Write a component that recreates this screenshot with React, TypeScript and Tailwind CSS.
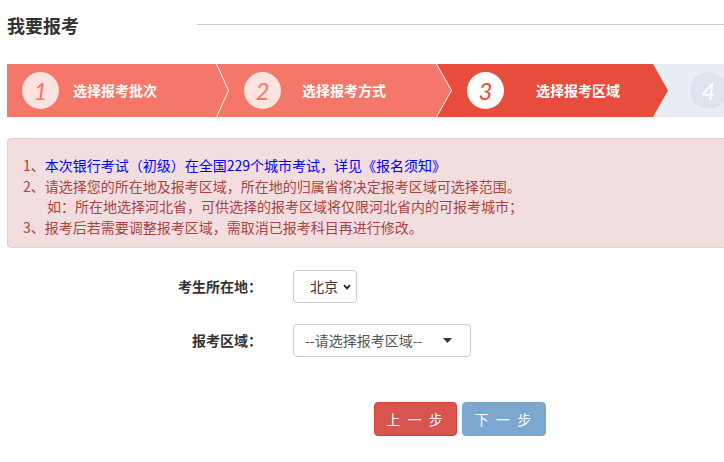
const cjk = "font-['Noto_Sans_CJK_SC','Noto_Sans',sans-serif]";

const steps = [
  {
    n: "1",
    label: "选择报考批次",
    wrap: "w-[221px] bg-[#f57769] [clip-path:polygon(0_0,calc(100%_-_12px)_0,100%_50%,calc(100%_-_12px)_100%,0_100%)] pl-[15px]",
    circle: "bg-[#fde3df] text-[#f2776b]",
    text: "ml-[14px]",
  },
  {
    n: "2",
    label: "选择报考方式",
    wrap: "w-[234px] -ml-[11px] bg-[#f57769] [clip-path:polygon(0_0,calc(100%_-_15px)_0,100%_50%,calc(100%_-_15px)_100%,0_100%,12px_50%)] pl-[27px]",
    circle: "bg-[#fde3df] text-[#f2776b]",
    text: "ml-[21px]",
  },
  {
    n: "3",
    label: "选择报考区域",
    wrap: "relative z-10 w-[231px] -ml-[14px] bg-[#e74c3c] [clip-path:polygon(0_0,calc(100%_-_15px)_0,100%_50%,calc(100%_-_15px)_100%,0_100%,15px_50%)] pl-[30px]",
    circle: "bg-white text-[#e74c3c]",
    text: "ml-[32px]",
  },
  {
    n: "4",
    label: "",
    wrap: "w-[140px] -ml-[15px] bg-[#e9eef4] pl-[37px]",
    circle: "bg-[#dde4ee] text-white",
    text: "",
  },
];

const notes = (
  <div className="mt-[21px] w-[760px] rounded-[4px] border border-[#ebccd1] bg-[#f2dede] pt-[16px] pb-[10px] pl-[15px] text-[14px] leading-[20.5px] text-[#a94442]">
    <p>
      1、<span className="text-[#0000ff]">本次银行考试（初级）在全国229个城市考试，详见《报名须知》</span>
    </p>
    <p>2、请选择您的所在地及报考区域，所在地的归属省将决定报考区域可选择范围。</p>
    <p className="pl-[24px]">如：所在地选择河北省，可供选择的报考区域将仅限河北省内的可报考城市；</p>
    <p>3、报考后若需要调整报考区域，需取消已报考科目再进行修改。</p>
  </div>
);

export default function App() {
  return (
    <div className={`w-[724px] h-[462px] overflow-hidden bg-white text-[#333] ${cjk}`}>
      <div className="w-[780px] pl-[7px]">
        {/* Header */}
        <div className="flex h-[49px] items-center">
          <h1 className="w-[190px] text-[18px] font-bold leading-none text-[#333]">我要报考</h1>
          <div className="h-px flex-1 bg-[#cccccc]" />
        </div>

        {/* Steps */}
        <div className="mt-[15px] flex h-[53px]">
          {steps.map((s) => (
            <div key={s.n} className={`flex h-full shrink-0 items-center ${s.wrap}`}>
              <div
                className={`flex h-[37px] w-[37px] shrink-0 items-center justify-center rounded-full font-['Lato',sans-serif] text-[24px] font-normal italic leading-none ${s.circle}`}
              >
                {s.n}
              </div>
              {s.label && (
                <span className={`whitespace-nowrap text-[14px] font-bold text-white ${s.text}`}>{s.label}</span>
              )}
            </div>
          ))}
        </div>

        {notes}

        {/* Form */}
        <div className="mt-[22px] flex h-[33px] items-center">
          <label className="w-[255px] text-right text-[14px] font-bold text-[#333]">考生所在地：</label>
          <div className="ml-[31px] flex h-[33px] w-[64px] items-center gap-[5px] rounded-[4px] border border-[#ccc] pl-[16px] text-[14px] text-[#333]">
            <span>北京</span>
            <svg width="8" height="6" viewBox="0 0 8 6">
              <path d="M1 1.2 L4 4.4 L7 1.2" fill="none" stroke="#222" strokeWidth="1.8" />
            </svg>
          </div>
        </div>
        <div className="mt-[21px] flex h-[33px] items-center">
          <label className="w-[255px] text-right text-[14px] font-bold text-[#333]">报考区域：</label>
          <div className="ml-[31px] flex h-[33px] w-[178px] items-center justify-between rounded-[4px] border border-[#ccc] pl-[11px] pr-[18px] text-[14px] text-[#555]">
            <span>--请选择报考区域--</span>
            <svg width="9" height="5" viewBox="0 0 9 5">
              <path d="M0 0 L9 0 L4.5 5 Z" fill="#333" />
            </svg>
          </div>
        </div>

        {/* Buttons */}
        <div className="mt-[45px] ml-[367px] flex gap-[5px]">
          <button className="h-[34px] w-[83px] rounded-[4px] border border-[#d43f3a] bg-[#d9534f] text-[14px] tracking-[2px] text-white">
            上 一 步
          </button>
          <button className="h-[34px] w-[84px] rounded-[4px] border border-[#7aa4cc] bg-[#7ba7d1] text-[14px] tracking-[2px] text-white">
            下 一 步
          </button>
        </div>
      </div>
    </div>
  );
}
